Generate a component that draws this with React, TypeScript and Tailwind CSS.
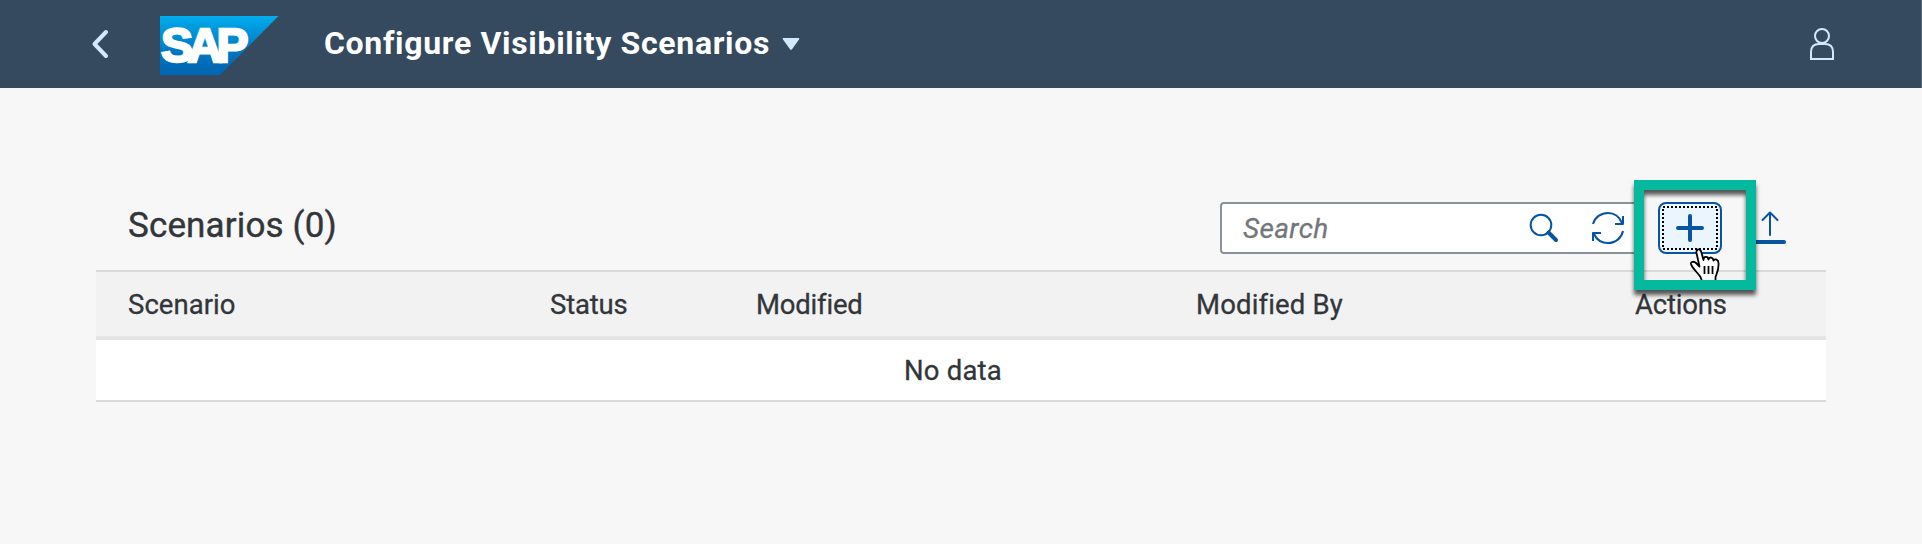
import React from "react";

const columns = [
  { label: "Scenario", cell: "w-[421px] pl-[31px]", text: "tracking-[0.05px]" },
  { label: "Status", cell: "w-[206px] pl-8", text: "tracking-[-0.2px]" },
  { label: "Modified", cell: "w-[440px] pl-8", text: "tracking-[-0.2px]" },
  { label: "Modified By", cell: "w-[439px] pl-8", text: "tracking-[0.15px]" },
  { label: "Actions", cell: "w-[223px] pl-8", text: "tracking-[-0.2px]" },
];

function SapLogo() {
  return (
    <svg className="ml-[51px] h-[59px] w-[119px]" viewBox="0 0 119 59">
      <defs>
        <linearGradient id="sap" x1="0" y1="0" x2="0" y2="1">
          <stop offset="0" stopColor="#00aeef" />
          <stop offset="0.22" stopColor="#0098dc" />
          <stop offset="0.55" stopColor="#007cc5" />
          <stop offset="0.85" stopColor="#0069b4" />
          <stop offset="1" stopColor="#0066b3" />
        </linearGradient>
      </defs>
      <path d="M0 0H118.5L60 59H0Z" fill="url(#sap)" />
      <text
        x="1"
        y="45.5"
        fill="#fff"
        stroke="#fff"
        strokeWidth="2.4"
        fontFamily="Liberation Sans, sans-serif"
        fontWeight="700"
        fontSize="48"
        letterSpacing="-5.6"
      >
        SAP
      </text>
    </svg>
  );
}

function Header() {
  return (
    <header className="flex h-[88px] items-start border-r border-[#5b6b7c] bg-[#354a5f] pt-4 pl-[91px]">
      <svg className="mt-[13px] h-[30px] w-[18px]" viewBox="0 0 18 30" fill="none" stroke="#d1e8ff" strokeWidth="4" strokeLinecap="round" strokeLinejoin="round">
        <path d="M15 3L3.5 15L15 27" />
      </svg>
      <SapLogo />
      <h1 className="mt-1 ml-[45px] w-[458px] font-['Roboto'] text-[32px] leading-[47px] font-bold tracking-[0.68px] whitespace-nowrap text-white">
        Configure Visibility Scenarios
      </h1>
      <svg className="mt-[21px] h-[14px] w-[18px]" viewBox="0 0 18 14" fill="#d1e8ff">
        <path d="M1.5 1H16.5Q18 1 17 2.4L10 12.2Q9 13.4 8 12.2L1 2.4Q0 1 1.5 1Z" />
      </svg>
      <svg className="mt-[11px] mr-[86px] ml-auto h-[34px] w-[26px]" viewBox="0 0 26 34" fill="none" stroke="#d1e8ff" strokeWidth="2">
        <circle cx="13" cy="9" r="7" />
        <path d="M2 32V25Q2 17 10 17H16Q24 17 24 25V32Z" />
      </svg>
    </header>
  );
}

function SearchField() {
  return (
    <div className="flex h-[52px] w-[418px] items-center rounded-[4px] border-2 border-[#89919a] bg-white pl-[21px] font-['Roboto'] text-[28px] text-[#74777a] italic">
      <span className="w-[285px] pt-px tracking-[0.35px] [-webkit-text-stroke:0.3px]">Search</span>
      <svg className="h-8 w-8 shrink-0" viewBox="0 0 32 32" fill="none" stroke="#0854a0">
        <circle cx="13" cy="13" r="10.3" strokeWidth="2" />
        <path d="M20.5 20.5L28 28" strokeWidth="4" strokeLinecap="round" />
      </svg>
      <svg className="ml-[30px] h-9 w-9 shrink-0" viewBox="0 0 36 36" fill="none" stroke="#0854a0" strokeWidth="2" strokeLinejoin="round">
        <path d="M3 14C5 7 11 3 18 3C24.500 3 29.500 7 32 13M33 6V14H25M33 21C31.500 28 25.500 33 18 33C11.500 33 6.500 29.500 4 24M3 31V23H11" />
      </svg>
    </div>
  );
}

function HandCursor() {
  return (
    <svg className="absolute top-[68px] left-[55px] h-[34px] w-[32px]" viewBox="0 0 32 34" fill="#fff" stroke="#000" strokeWidth="1.8" strokeLinejoin="round">
      <path d="M13 33L11.500 29C9 25 3 20 2 16C1.500 13.500 5 13 7 15L10.500 18.500L7.500 5C6.800 1 11 0 12.300 4L14.500 12C14.500 8 19 8 19.500 11.500C20.500 8.500 24 9 24.500 12.500C26 10.500 29.500 11.500 29.500 15C30 22 27.500 26 26.500 29V33Z" />
      <path d="M15.500 18V26M19.500 18V26M23.500 18V26" />
    </svg>
  );
}

function AddButton() {
  return (
    <div className="relative ml-5 h-[52px] w-16">
      <button className="flex h-[52px] w-16 items-center justify-center rounded-[8px] border-2 border-[#0854a0] bg-[#ebf5fe]">
        <svg className="h-[48px] w-[60px] shrink-0" viewBox="0 0 60 48" fill="none">
          <rect x="3" y="3" width="54" height="42" stroke="#000" strokeWidth="2" strokeDasharray="2 2" />
          <path d="M30 12V36M18 24H42" stroke="#0854a0" strokeWidth="4" strokeLinecap="round" />
        </svg>
      </button>
      <div className="absolute top-[-22px] left-[-24px] h-[110px] w-[122px]">
        <div className="absolute inset-0 overflow-hidden">
          <HandCursor />
        </div>
        <div className="absolute inset-0 border-10 border-[#04b99d] drop-shadow-[0_5px_2px_rgba(0,0,0,0.65)]" />
      </div>
    </div>
  );
}

function Toolbar() {
  return (
    <div className="flex h-[182px] pt-[114px] pl-8">
      <h2 className="w-[1092px] font-['Roboto'] text-[35px] leading-[48px] tracking-[0.15px] text-[#32363a] [-webkit-text-stroke:0.4px]">Scenarios (0)</h2>
      <SearchField />
      <AddButton />
      <svg className="mt-2 ml-8 h-9 w-8" viewBox="0 0 32 36" fill="none" stroke="#0854a0" strokeLinecap="round" strokeLinejoin="round">
        <path d="M16 25V3M8.500 10L16 2.500L23.500 10" strokeWidth="2" />
        <path d="M2 32H30" strokeWidth="4" />
      </svg>
    </div>
  );
}

function ScenarioTable() {
  return (
    <div className="border-y-2 border-[#d9d9d9] font-['Roboto'] text-[27.5px] text-[#32363a] [-webkit-text-stroke:0.3px]">
      <div className="flex h-[68px] items-center border-b-4 border-[#e5e5e5] bg-[#f2f2f2] pt-0.5 pl-px">
        {columns.map((c) => (
          <div key={c.label} className={c.cell}>
            <span className={c.text}>{c.label}</span>
          </div>
        ))}
      </div>
      <div className="flex h-[60px] items-center bg-white pt-0.5 pl-[808px]">
        <span className="tracking-[0.2px]">No data</span>
      </div>
    </div>
  );
}

export default function App() {
  return (
    <div className="h-[544px] w-full bg-[#f7f7f7]">
      <Header />
      <main className="mr-24 ml-24">
        <Toolbar />
        <ScenarioTable />
      </main>
    </div>
  );
}
